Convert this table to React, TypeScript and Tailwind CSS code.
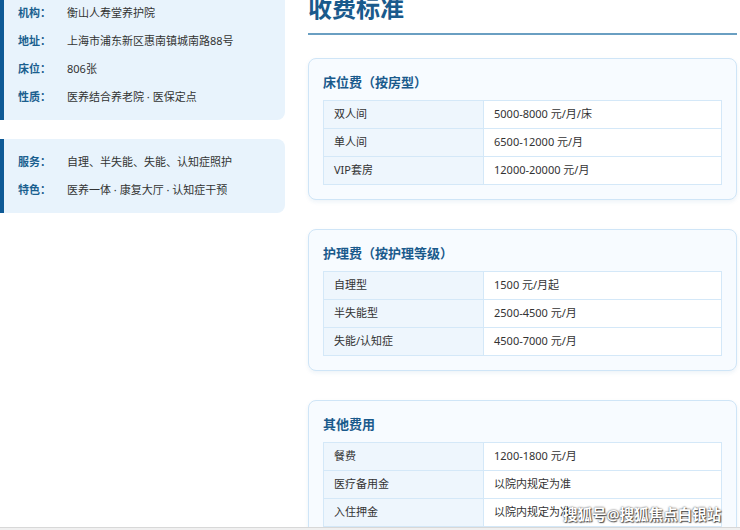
const font = { fontFamily: '"Noto Sans", "Noto Sans CJK SC", sans-serif' };

const profile = [
  { label: '机构：', value: '衡山人寿堂养护院' },
  { label: '地址：', value: '上海市浦东新区惠南镇城南路88号' },
  { label: '床位：', value: '806张' },
  { label: '性质：', value: '医养结合养老院 · 医保定点' },
];

const extra = [
  { label: '服务：', value: '自理、半失能、失能、认知症照护' },
  { label: '特色：', value: '医养一体 · 康复大厅 · 认知症干预' },
];

const fees = [
  {
    title: '床位费（按房型）',
    rows: [
      ['双人间', '5000-8000 元/月/床'],
      ['单人间', '6500-12000 元/月'],
      ['VIP套房', '12000-20000 元/月'],
    ],
  },
  {
    title: '护理费（按护理等级）',
    rows: [
      ['自理型', '1500 元/月起'],
      ['半失能型', '2500-4500 元/月'],
      ['失能/认知症', '4500-7000 元/月'],
    ],
  },
  {
    title: '其他费用',
    rows: [
      ['餐费', '1200-1800 元/月'],
      ['医疗备用金', '以院内规定为准'],
      ['入住押金', '以院内规定为准'],
    ],
  },
];

function InfoCard({ items }: { items: { label: string; value: string }[] }) {
  return (
    <div className="rounded-r-lg border-l-4 border-[#0e5a96] bg-[#e8f3fc] py-[9px] pl-[14px]">
      {items.map((it) => (
        <div key={it.label} className="flex h-[28px] items-center text-[11px]">
          <span className="w-[49px] shrink-0 font-bold text-[#1a5f8f]">{it.label}</span>
          <span className="text-[#333]">{it.value}</span>
        </div>
      ))}
    </div>
  );
}

function FeeCard({ title, rows }: { title: string; rows: string[][] }) {
  return (
    <div className="rounded-lg border border-[#cfe5f7] bg-[#f7fbff] px-[14px] pb-[14px] pt-[13px] shadow-[0_2px_4px_rgba(30,100,160,0.08)]">
      <h3 className="mb-[8px] h-[20px] text-[13px] font-bold leading-[20px] text-[#1a5a8c]">{title}</h3>
      <table className="w-full border-collapse text-[11px] text-[#333]">
        <tbody>
          {rows.map(([k, v]) => (
            <tr key={k} className="h-[28px]">
              <td className="w-[160px] border border-[#d4e8f8] bg-[#eef6fd] px-[10px]">{k}</td>
              <td className="border border-[#d4e8f8] bg-white px-[10px]">{v}</td>
            </tr>
          ))}
        </tbody>
      </table>
    </div>
  );
}

export default function App() {
  return (
    <div className="relative h-[530px] w-[740px] overflow-hidden bg-white" style={font}>
      <div className="h-[527px] overflow-hidden">
        <div className="-mt-[10px] flex">
          <div className="flex w-[285px] shrink-0 flex-col gap-[19px]">
            <InfoCard items={profile} />
            <InfoCard items={extra} />
          </div>
          <div className="ml-[23px] flex w-[429px] flex-col">
            <h2 className="mt-[1px] h-[34px] text-[24px] font-bold leading-[34px] text-[#1a5a8c]">收费标准</h2>
            <div className="mt-[8px] h-[2px] bg-[#6a9fc2]" />
            <div className="mt-[23px] flex flex-col gap-[29px]">
              {fees.map((f) => (
                <FeeCard key={f.title} title={f.title} rows={f.rows} />
              ))}
            </div>
          </div>
        </div>
      </div>
      <div className="h-[1px] bg-[#d8d8d8]" />
      <div className="h-[2px] bg-[#f0f0f0]" />
      <div
        className="absolute left-[563px] top-[504px] text-[14.5px] font-semibold leading-[20px] text-white"
        style={{ textShadow: '0 0 2px rgba(0,0,0,0.8), 1px 1px 1px rgba(0,0,0,0.6)' }}
      >
        搜狐号@搜狐焦点白银站
      </div>
    </div>
  );
}
